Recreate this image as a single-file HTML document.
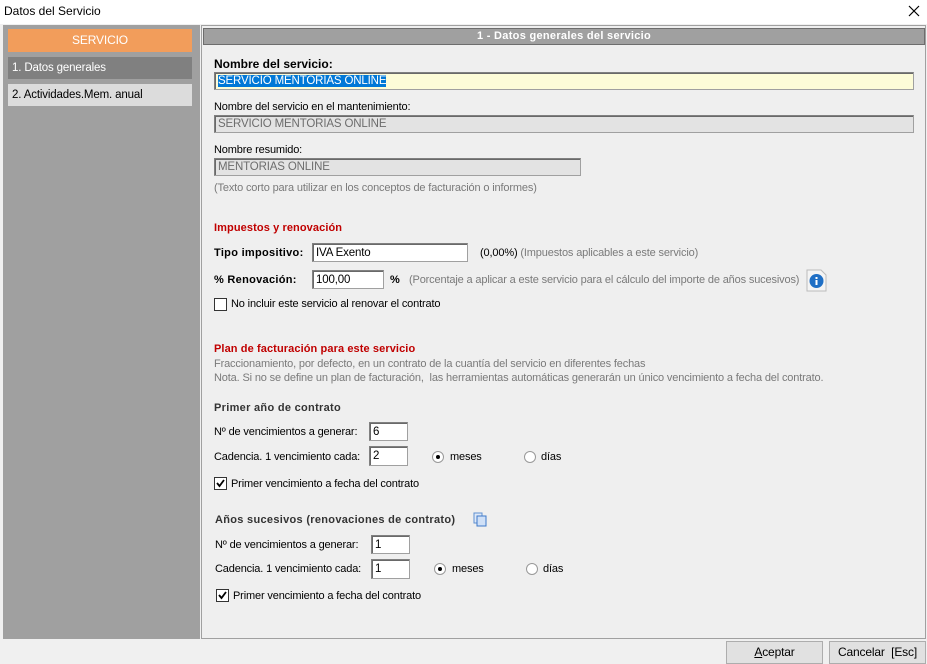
<!DOCTYPE html>
<html><head><meta charset="utf-8"><style>
*{margin:0;padding:0;box-sizing:border-box}
body{width:927px;height:664px;background:#f0f0f0;font-family:"Liberation Sans",Tahoma,sans-serif;font-size:11px;letter-spacing:-0.15px;color:#000;position:relative;overflow:hidden}
.a{position:absolute;white-space:nowrap}
.t{line-height:14px}
.b{font-weight:bold;letter-spacing:0.3px}
.g{color:#7a7a7a}
.r{color:#c00000;font-weight:bold;letter-spacing:0.1px}
.in{position:absolute;background:#fff;border:1px solid #a0a0a0;border-top-color:#808080;border-left-color:#808080;box-shadow:inset 1px 1px 0 #696969;padding-left:3px;padding-top:1px;font-size:11.5px;white-space:nowrap}
.dis{background:#e3e3e3;color:#6d6d6d}
.cb{position:absolute;width:13px;height:13px;background:#fff;border:1px solid #333}
.rd{position:absolute;width:12px;height:12px;border-radius:50%;background:#fff;border:1px solid #999}
.rd.on::after{content:"";position:absolute;left:3px;top:3px;width:4px;height:4px;border-radius:50%;background:#000}
.btn{position:absolute;height:23px;background:#e1e1e1;border:1px solid #adadad;text-align:center;line-height:21px;font-size:12px}
</style></head><body>
<div class="a" style="left:0;top:0;width:927px;height:24px;background:#fff"></div>
<div class="a t" style="left:4px;top:4px;font-size:12px;letter-spacing:0">Datos del Servicio</div>
<svg class="a" style="left:908px;top:5px" width="12" height="12"><path d="M1 1L11 11M11 1L1 11" stroke="#000" stroke-width="1.2"/></svg>

<div class="a" style="left:3px;top:25px;width:197px;height:614px;background:#a0a0a0"></div>
<div class="a" style="left:8px;top:29px;width:184px;height:23px;background:#f29d5b;color:#fff;text-align:center;line-height:23px;font-size:12px">SERVICIO</div>
<div class="a" style="left:8px;top:57px;width:184px;height:22px;background:#808080;color:#fff;line-height:22px;padding-left:4px;font-size:11.5px">1. Datos generales</div>
<div class="a" style="left:8px;top:84px;width:184px;height:22px;background:#dcdcdc;line-height:22px;padding-left:4px;font-size:11.5px">2. Actividades.Mem. anual</div>

<div class="a" style="left:201px;top:25px;width:725px;height:614px;border:1px solid #a0a0a0;background:#efefef"></div>
<div class="a b" style="left:203px;top:28px;width:722px;height:17px;background:#a0a0a0;border:1px solid #6d6d6d;color:#fff;text-align:center;line-height:15px">1 - Datos generales del servicio</div>

<div class="a t b" style="left:214px;top:57px;font-size:12px;letter-spacing:0">Nombre del servicio:</div>
<div class="in" style="left:214px;top:72px;width:700px;height:18px;line-height:15px;background:#fdfcd8"><span style="background:#0078d7;color:#fff">SERVICIO MENTORIAS ONLINE</span></div>
<div class="a t" style="left:214px;top:100px">Nombre del servicio en el mantenimiento:</div>
<div class="in dis" style="left:214px;top:115px;width:700px;height:18px;line-height:15px">SERVICIO MENTORIAS ONLINE</div>
<div class="a t" style="left:214px;top:143px">Nombre resumido:</div>
<div class="in dis" style="left:214px;top:158px;width:367px;height:18px;line-height:15px">MENTORIAS ONLINE</div>
<div class="a t g" style="left:214px;top:181px">(Texto corto para utilizar en los conceptos de facturación o informes)</div>

<div class="a t r" style="left:214px;top:221px">Impuestos y renovación</div>
<div class="a t b" style="left:214px;top:246px">Tipo impositivo:</div>
<div class="in" style="left:312px;top:243px;width:156px;height:19px;line-height:16px">IVA Exento</div>
<div class="a t" style="left:480px;top:246px">(0,00%) <span class="g">(Impuestos aplicables a este servicio)</span></div>
<div class="a t b" style="left:214px;top:273px">% Renovación:</div>
<div class="in" style="left:312px;top:270px;width:72px;height:19px;line-height:16px">100,00</div>
<div class="a t b" style="left:390px;top:273px">%</div>
<div class="a t g" style="left:409px;top:273px">(Porcentaje a aplicar a este servicio para el cálculo del importe de años sucesivos)</div>
<svg class="a" style="left:806px;top:269px" width="21" height="23"><path d="M1 1H15L20 6V22H1Z" fill="#f4f4f4" stroke="#bbb"/><circle cx="10.5" cy="12" r="7" fill="#1f6fc5"/><rect x="9.5" y="11" width="2" height="5" fill="#fff"/><rect x="9.5" y="8" width="2" height="2" fill="#fff"/></svg>
<div class="cb" style="left:214px;top:298px"></div>
<div class="a t" style="left:231px;top:297px">No incluir este servicio al renovar el contrato</div>

<div class="a t r" style="left:214px;top:342px">Plan de facturación para este servicio</div>
<div class="a t g" style="left:214px;top:357px">Fraccionamiento, por defecto, en un contrato de la cuantía del servicio en diferentes fechas</div>
<div class="a t g" style="left:214px;top:371px">Nota. Si no se define un plan de facturación,&nbsp; las herramientas automáticas generarán un único vencimiento a fecha del contrato.</div>

<div class="a t b" style="left:214px;top:401px;color:#333">Primer año de contrato</div>
<div class="a t" style="left:214px;top:425px">Nº de vencimientos a generar:</div>
<div class="in" style="left:369px;top:422px;width:39px;height:19px;line-height:16px">6</div>
<div class="a t" style="left:214px;top:450px">Cadencia. 1 vencimiento cada:</div>
<div class="in" style="left:369px;top:446px;width:39px;height:20px;line-height:17px">2</div>
<div class="rd on" style="left:432px;top:451px"></div><div class="a t" style="left:450px;top:450px">meses</div>
<div class="rd" style="left:524px;top:451px"></div><div class="a t" style="left:541px;top:450px">días</div>
<div class="cb" style="left:214px;top:477px"></div>
<svg class="a" style="left:215px;top:478px" width="11" height="11"><path d="M2 5L4.5 8L9 2" stroke="#000" stroke-width="1.8" fill="none"/></svg>
<div class="a t" style="left:231px;top:477px">Primer vencimiento a fecha del contrato</div>

<div class="a t b" style="left:215px;top:513px;color:#333">Años sucesivos (renovaciones de contrato)</div>
<svg class="a" style="left:473px;top:512px" width="14" height="15"><rect x="1" y="1" width="8" height="10" fill="#dfe9f7" stroke="#5d8fd0"/><rect x="4" y="4" width="9" height="10" fill="#cfe0f7" stroke="#3d78c8"/></svg>
<div class="a t" style="left:215px;top:538px">Nº de vencimientos a generar:</div>
<div class="in" style="left:371px;top:535px;width:39px;height:19px;line-height:16px">1</div>
<div class="a t" style="left:215px;top:562px">Cadencia. 1 vencimiento cada:</div>
<div class="in" style="left:371px;top:559px;width:39px;height:20px;line-height:17px">1</div>
<div class="rd on" style="left:434px;top:563px"></div><div class="a t" style="left:452px;top:562px">meses</div>
<div class="rd" style="left:526px;top:563px"></div><div class="a t" style="left:543px;top:562px">días</div>
<div class="cb" style="left:216px;top:589px"></div>
<svg class="a" style="left:217px;top:590px" width="11" height="11"><path d="M2 5L4.5 8L9 2" stroke="#000" stroke-width="1.8" fill="none"/></svg>
<div class="a t" style="left:233px;top:589px">Primer vencimiento a fecha del contrato</div>

<div class="btn" style="left:726px;top:641px;width:97px"><u>A</u>ceptar</div>
<div class="btn" style="left:829px;top:641px;width:97px">Cancelar&nbsp; [Esc]</div>
</body></html>
